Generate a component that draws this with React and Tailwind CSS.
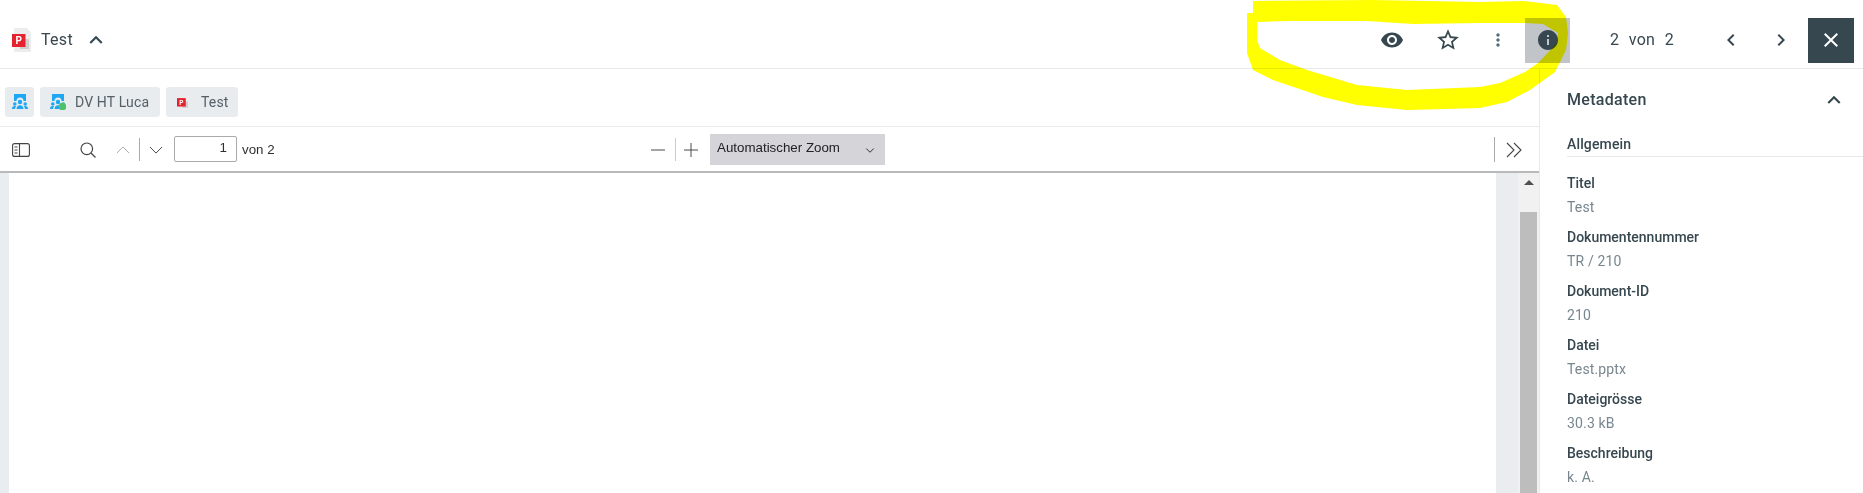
import React from "react";

const metadata = [
  ["Titel", "Test"],
  ["Dokumentennummer", "TR / 210"],
  ["Dokument-ID", "210"],
  ["Datei", "Test.pptx"],
  ["Dateigrösse", "30.3 kB"],
  ["Beschreibung", "k. A."],
];

function MuiIcon({ d, className }) {
  return (
    <svg viewBox="0 0 24 24" className={className} fill="currentColor">
      <path d={d} />
    </svg>
  );
}

function PptIcon({ className }) {
  return (
    <svg viewBox="0 0 20 24" className={className}>
      <path d="M2 0h13l4 5v19H2z" fill="#ececec" />
      <path d="M8 11h9v10H8z" fill="#cfcfcf" />
      <path d="M0 6h13.500v13H0z" fill="#e5232e" />
      <text x="3.500" y="16" fontSize="10" fontWeight="700" fill="#fff" fontFamily="Roboto, sans-serif">P</text>
    </svg>
  );
}

function RoomIcon({ className, online }) {
  return (
    <svg viewBox="0 0 16 16" className={className} fill="#1ea7f5">
      <path d="M2 0h12v7h-2.500a3 3 0 0 0-7 0H2z" />
      <circle cx="8" cy="8" r="2.200" />
      <circle cx="2.800" cy="10" r="1.800" />
      <circle cx="13.200" cy="10" r="1.800" />
      <path d="M4.500 15c0-2.500 1.500-3.800 3.500-3.800s3.500 1.300 3.500 3.800z" />
      <path d="M0 15c0-2 1-2.900 2.800-2.900.6 0 1 .1 1.200.3-.7.700-1 1.600-1 2.600zM16 15c0-2-1-2.900-2.800-2.900-.6 0-1 .1-1.200.3.700.700 1 1.600 1 2.600z" />
      {online && <circle cx="12.500" cy="12.500" r="3.800" fill="#4cc26a" />}
    </svg>
  );
}

function Line({ d, className }) {
  return (
    <svg viewBox="0 0 16 16" className={className} fill="none" stroke="currentColor" strokeWidth="1.100">
      <path d={d} />
    </svg>
  );
}

export default function App() {
  return (
    <div className="relative flex h-[493px] w-[1863px] flex-col overflow-hidden bg-white font-['Roboto',sans-serif] text-[#37474f]">
      <header className="flex h-[69px] shrink-0 items-center border-b border-[#e6eaed] pt-[12px]">
        <PptIcon className="ml-[12px] h-[24px] w-[20px]" />
        <span className="ml-[9px] text-[16px] tracking-[0.3px]">Test</span>
        <MuiIcon d="M12 8l-6 6 1.410 1.410L12 10.830l4.590 4.580L18 14z" className="ml-[10px] h-[26px] w-[26px]" />
        <div className="ml-auto flex items-center">
          <div className="flex h-[45px] w-[56px] items-center justify-center">
            <MuiIcon d="M12 4.500C7 4.500 2.730 7.610 1 12c1.730 4.390 6 7.500 11 7.500s9.270-3.110 11-7.500c-1.730-4.390-6-7.500-11-7.500zM12 17c-2.760 0-5-2.240-5-5s2.240-5 5-5 5 2.240 5 5-2.240 5-5 5zm0-8c-1.660 0-3 1.340-3 3s1.340 3 3 3 3-1.340 3-3-1.340-3-3-3z" className="h-[24px] w-[24px]" />
          </div>
          <div className="flex h-[45px] w-[56px] items-center justify-center">
            <MuiIcon d="M22 9.240l-7.190-.620L12 2 9.190 8.630 2 9.240l5.460 4.730L5.820 21 12 17.270 18.180 21l-1.630-7.030L22 9.240zM12 15.400l-3.760 2.270 1-4.280-3.320-2.880 4.380-.380L12 6.100l1.710 4.040 4.380.380-3.320 2.880 1 4.280L12 15.400z" className="h-[26px] w-[26px]" />
          </div>
          <div className="flex h-[45px] w-[49px] items-center justify-start pl-[12px]">
            <MuiIcon d="M12 8c1.100 0 2-.900 2-2s-.900-2-2-2-2 .900-2 2 .900 2 2 2zm0 2c-1.100 0-2 .900-2 2s.900 2 2 2 2-.900 2-2-.900-2-2-2zm0 6c-1.100 0-2 .900-2 2s.900 2 2 2 2-.900 2-2-.900-2-2-2z" className="h-[20px] w-[20px] text-[#546e7a]" />
          </div>
          <div className="flex h-[45px] w-[45px] items-center justify-center bg-[#c1c5c9]">
            <MuiIcon d="M12 2C6.480 2 2 6.480 2 12s4.480 10 10 10 10-4.480 10-10S17.520 2 12 2zm1 15h-2v-6h2v6zm0-8h-2V7h2v2z" className="h-[24px] w-[24px]" />
          </div>
          <div className="ml-[40px] flex w-[64px] justify-between text-[16px] tracking-[0.3px]">
            <span>2</span>
            <span>von</span>
            <span>2</span>
          </div>
          <MuiIcon d="M15.410 7.410L14 6l-6 6 6 6 1.410-1.410L10.830 12z" className="ml-[45px] h-[24px] w-[24px]" />
          <MuiIcon d="M10 6L8.590 7.410 13.170 12l-4.580 4.590L10 18l6-6z" className="ml-[26px] h-[24px] w-[24px]" />
          <div className="ml-[15px] mr-[9px] flex h-[45px] w-[46px] items-center justify-center bg-[#37474f] text-white">
            <MuiIcon d="M19 6.410L17.590 5 12 10.590 6.410 5 5 6.410 10.590 12 5 17.590 6.410 19 12 13.410 17.590 19 19 17.590 13.410 12z" className="h-[24px] w-[24px]" />
          </div>
        </div>
      </header>

      <div className="flex min-h-0 flex-1">
        <main className="flex w-[1539px] shrink-0 flex-col">
          <div className="flex h-[58px] shrink-0 items-center gap-[6px] border-b border-[#e9ecef] pl-[5px] pt-[9px] text-[14px] tracking-[0.15px] text-[#546068]">
            <div className="flex h-[30px] w-[29px] items-center justify-center rounded-[3px] bg-[#e9ecef]">
              <RoomIcon className="h-[16px] w-[16px]" />
            </div>
            <div className="flex h-[30px] w-[120px] items-center rounded-[3px] bg-[#e9ecef] pl-[10px]">
              <RoomIcon online className="h-[16px] w-[16px]" />
              <span className="ml-[9px]">DV HT Luca</span>
            </div>
            <div className="flex h-[30px] w-[72px] items-center rounded-[3px] bg-[#e9ecef] pl-[11px]">
              <PptIcon className="h-[16px] w-[13px]" />
              <span className="ml-[11px]">Test</span>
            </div>
          </div>

          <div className="flex h-[46px] shrink-0 items-center border-b-2 border-[#b9b9b9] pt-[1px] font-['Liberation_Sans',sans-serif] text-[13.330px] text-[#2f2f2f]">
            <div className="flex w-[651px] items-center">
              <svg viewBox="0 0 18 14" className="ml-[12px] h-[14px] w-[18px]" fill="none" stroke="#444" strokeWidth="1.100">
                <rect x="0.600" y="0.600" width="16.800" height="12.800" rx="2" />
                <path d="M7.500 1v12M2.500 4h3M2.500 7h3M2.500 10h3" />
              </svg>
              <svg viewBox="0 0 16 16" className="ml-[50px] h-[16px] w-[16px]" fill="none" stroke="#444" strokeWidth="1.200">
                <circle cx="6.800" cy="6.800" r="5.800" />
                <path d="M11 11l4.500 4.500" />
              </svg>
              <Line d="M1 11.500L8 4.500l7 7" className="ml-[20px] h-[14px] w-[14px] text-[#aaa]" />
              <div className="ml-[9px] h-[23px] w-px bg-[#aaa]" />
              <Line d="M1 4.500L8 11.500l7-7" className="ml-[9px] h-[14px] w-[14px] text-[#444]" />
              <input
                readOnly
                value="1"
                className="mb-[2px] ml-[11px] h-[26px] w-[63px] rounded-[2px] border border-[#aaa] pb-[2px] pr-[9px] text-right outline-none"
              />
              <span className="ml-[5px]">von 2</span>
            </div>
            <Line d="M0 8h16" className="h-[14px] w-[14px] text-[#444]" />
            <div className="ml-[10px] h-[23px] w-px bg-[#ccc]" />
            <Line d="M0 8h16M8 0v16" className="ml-[8px] h-[14px] w-[14px] text-[#444]" />
            <div className="ml-[12px] flex h-[31px] w-[175px] items-center bg-[#d4d4d9] pb-[3px] pl-[7px] text-[#222]">
              <span>Automatischer Zoom</span>
              <Line d="M3 6l5 5 5-5" className="ml-auto mr-[9px] mt-[4px] h-[12px] w-[12px] text-[#111]" />
            </div>
            <div className="ml-auto mr-[17px] flex items-center">
              <div className="h-[25px] w-px bg-[#aaa]" />
              <svg viewBox="0 0 16 16" className="ml-[11px] h-[16px] w-[16px]" fill="none" stroke="#444" strokeWidth="1.100">
                <path d="M1 1l7 7-7 7M8 1l7 7-7 7" />
              </svg>
            </div>
          </div>

          <div className="flex min-h-0 flex-1">
            <div className="w-[9px] bg-[#e9edf0]" />
            <div className="flex-1 bg-white" />
            <div className="w-[22px] bg-[#e9edf0]" />
            <div className="flex w-[21px] flex-col items-center bg-[#f1f1f1]">
              <div className="mt-[7px] h-0 w-0 border-x-[5px] border-b-[5px] border-x-transparent border-b-[#505050]" />
              <div className="mt-[27px] w-[17px] flex-1 bg-[#bdbdbd]" />
            </div>
          </div>
        </main>

        <aside className="min-w-0 flex-1 border-l border-[#e6eaed] pl-[27px]">
          <div className="flex h-[62px] items-center justify-between pr-[16px]">
            <span className="text-[16px] font-medium tracking-[0.3px]">Metadaten</span>
            <MuiIcon d="M12 8l-6 6 1.410 1.410L12 10.830l4.590 4.580L18 14z" className="h-[26px] w-[26px]" />
          </div>
          <div className="flex h-[26px] items-center border-b border-[#e6eaed] pt-[1px] text-[14px] font-medium tracking-[0.15px]">
            Allgemein
          </div>
          <dl className="flex flex-col gap-[6px] pt-[14px] text-[14px] leading-[24px]">
            {metadata.map(([label, value]) => (
              <div key={label}>
                <dt className="font-medium">{label}</dt>
                <dd className="tracking-[0.15px] text-[#78868e]">{value}</dd>
              </div>
            ))}
          </dl>
        </aside>
      </div>

      {/* highlighter scribble drawn over the screenshot */}
      <svg viewBox="0 0 1863 493" className="pointer-events-none absolute left-0 top-0 h-[493px] w-[1863px] mix-blend-multiply">
        <path
          fillRule="evenodd"
          fill="#ffff00"
          d="M1253 1 L1373 0 L1480 2 L1523 1 L1557 5 L1566 17 L1568 33 L1566 50 L1555 72 L1530 90 L1507 102 L1480 108 L1407 110 L1357 105 L1323 97 L1273 80 L1253 70 L1247 53 L1247 13 L1253 13 Z M1257 22 L1257 40 L1260 48 L1280 60 L1307 70 L1357 85 L1407 90 L1480 87 L1500 83 L1525 72 L1538 63 L1557 43 L1558 33 L1543 24 L1525 23 L1480 23 L1413 24 L1367 21 L1290 21 Z"
        />
      </svg>
    </div>
  );
}
